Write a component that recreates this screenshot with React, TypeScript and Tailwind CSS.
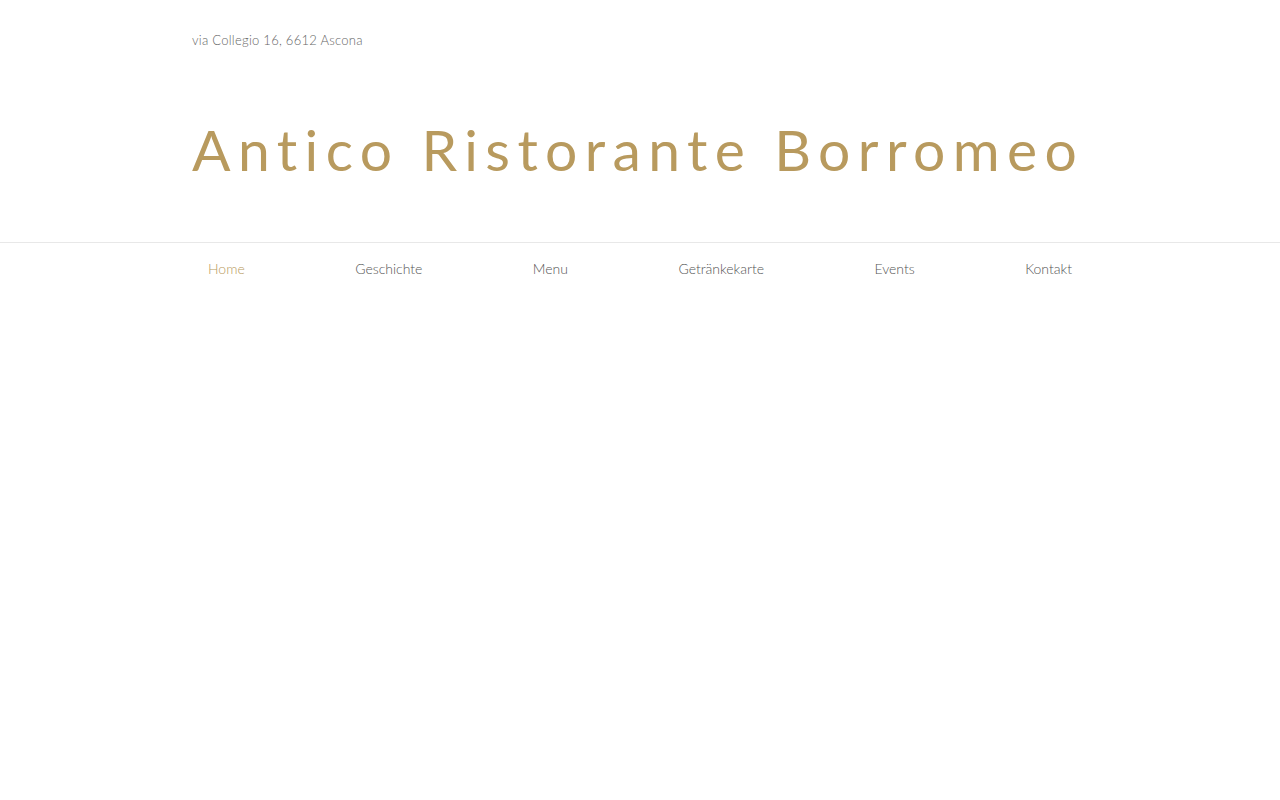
export default function App() {
  const nav = ["Home", "Geschichte", "Menu", "Getränkekarte", "Events", "Kontakt"];

  return (
    <main className="min-h-screen bg-white font-['Lato',sans-serif]">
      {/* HEADER */}
      <header className="mx-auto w-[896px]">
        <p className="pt-[31px] text-[13px] font-light tracking-[0.02em] text-[#666]">
          via Collegio 16, 6612 Ascona
        </p>
        <h1 className="mt-[66px] whitespace-nowrap text-[57px] leading-[64px] font-normal tracking-[0.13em] text-[#b89a5e]">
          Antico Ristorante Borromeo
        </h1>
      </header>

      {/* NAV */}
      <nav className="mt-[61px] border-t border-[#e8e8e8]">
        <ul className="mx-auto flex w-[896px] justify-between px-4 pt-[15px] text-[14px] font-light text-[#555]">
          {nav.map((item, i) => (
            <li key={item}>
              <a href="#" className={i === 0 ? "text-[#b89a5e]" : "hover:text-[#b89a5e]"}>
                {item}
              </a>
            </li>
          ))}
        </ul>
      </nav>
    </main>
  );
}
